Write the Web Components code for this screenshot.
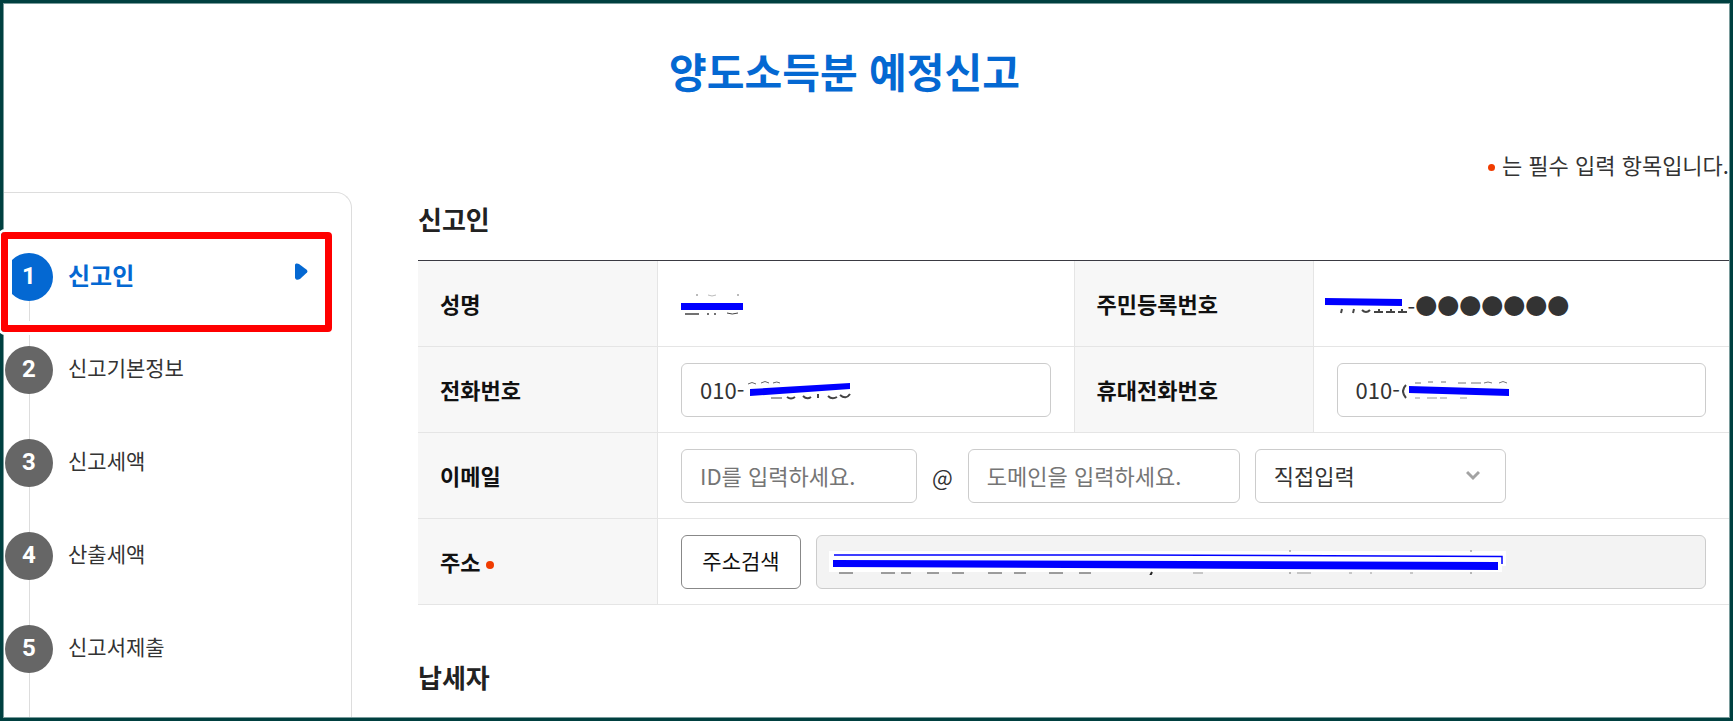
<!DOCTYPE html>
<html lang="ko">
<head>
<meta charset="utf-8">
<title>양도소득분 예정신고</title>
<style>
  html, body{
    margin:0;
    height:100%;
  }

  body{
    font-family:"Noto Sans CJK KR", "Noto Sans", sans-serif;
    font-size:22px;
    color:#333;
    background:#fff;
  }
</style>
</head>
<body>
<report-page>
  <span slot="title">양도소득분 예정신고</span>
  <span slot="note">는 필수 입력 항목입니다.</span>
  <step-list slot="steps">
    <step-item number="1" active>신고인</step-item>
    <step-item number="2">신고기본정보</step-item>
    <step-item number="3">신고세액</step-item>
    <step-item number="4">산출세액</step-item>
    <step-item number="5">신고서제출</step-item>
  </step-list>
  <form-section>
    <span slot="title">신고인</span>
    <applicant-form></applicant-form>
  </form-section>
  <form-section>
    <span slot="title">납세자</span>
  </form-section>
</report-page>

<script>
class BaseElement extends HTMLElement {
  constructor() {
    super();
    this.attachShadow({ mode: 'open' });
    this.shadowRoot.innerHTML = this.template();
  }
}

class ReportPage extends BaseElement {
  template() {
    return `
      <style>
        :host{
          display:flex;
          flex-direction:column;
          box-sizing:border-box;
          min-height:100vh;
          border:3px solid #004040;
          box-shadow:inset 0 0 0 1px #7a9c9c;
          padding:1px;
        }

        h1{
          margin:0;
          padding:36px 44px 0 0;
          font-size:41px;
          line-height:60px;
          font-weight:700;
          text-align:center;
          color:#0468d2;
        }

        .note{
          margin:0;
          padding-top:48px;
          line-height:32px;
          text-align:right;
        }

        .note::before{
          content:"";
          display:inline-block;
          width:7px;
          height:7px;
          margin-right:7px;
          border-radius:50%;
          background:#f03c00;
          vertical-align:3px;
        }

        .layout{
          flex:1;
          display:flex;
          gap:66px;
          margin-top:12px;
        }

        main{
          flex:1;
          min-width:0;
          padding-top:7px;
        }
      </style>

      <h1><slot name="title"></slot></h1>
      <p class="note"><slot name="note"></slot></p>
      <div class="layout">
        <slot name="steps"></slot>
        <main><slot></slot></main>
      </div>
    `;
  }
}

class StepList extends BaseElement {
  template() {
    return `
      <style>
        :host{
          display:flex;
          flex-direction:column;
          box-sizing:border-box;
          flex:0 0 348px;
          padding:60px 26px 0 1px;
          border-top:1px solid #ddd;
          border-right:1px solid #ddd;
          border-top-right-radius:16px;
        }

        ::slotted(:last-child){
          flex:1;
        }
      </style>
      <slot></slot>
    `;
  }
}

class StepItem extends BaseElement {
  template() {
    return `
      <style>
        :host{
          display:block;
          position:relative;
          min-height:68px;
          font-size:21px;
        }

        :host(:not(:last-child)){
          height:93px;
        }

        /* line down to the next step */
        :host::before{
          content:"";
          position:absolute;
          top:0;
          bottom:0;
          left:24px;
          width:1px;
          background:#ddd;
        }

        a{
          display:flex;
          align-items:center;
          gap:15px;
          height:48px;
          color:inherit;
          text-decoration:none;
        }

        .number{
          position:relative;
          width:48px;
          border-radius:50%;
          background:#666;
          color:#fff;
          font:700 24px/46px Roboto, sans-serif;
          padding-bottom:2px;
          text-align:center;
        }

        .label{
          padding-bottom:6px;
        }

        svg{
          display:none;
          margin:0 -1px 12px auto;
        }

        :host([active]) a{
          padding-right:18px;
          color:#0468d2;
          font-size:24px;
          font-weight:700;
        }

        :host([active]) .number{
          background:#0468d2;
        }

        :host([active]) svg{
          display:block;
        }

        /* marker frame round the current step */
        :host([active])::after{
          content:"";
          position:absolute;
          z-index:1;
          top:-21px;
          left:-4px;
          right:-7px;
          height:86px;
          border:7px solid #f00;
          border-radius:4px;
          box-shadow:0 0 0 3px #fff, inset 0 0 0 4px #fff;
          pointer-events:none;
        }
      </style>
      <a href="#">
        <span class="number"></span>
        <span class="label"><slot></slot></span>
        <svg width="13" height="17" viewBox="0 0 13 17"><path d="M0 2Q0 0 2 .5L4 1L12 7Q13 8.500 12 9.500L5 16Q3 17 1 16.500L0 15Z" fill="#0468d2"/></svg>
      </a>
    `;
  }

  connectedCallback() {
    this.shadowRoot.querySelector('.number').textContent = this.getAttribute('number');
    if (this.hasAttribute('active')) {
      this.shadowRoot.querySelector('a').setAttribute('aria-current', 'step');
    }
  }
}

class FormSection extends BaseElement {
  template() {
    return `
      <style>
        :host{
          display:block;
          margin-bottom:52px;
        }

        :host(:last-child){
          margin-bottom:0;
        }

        h2{
          margin:0 0 21px;
          font-size:26px;
          line-height:40px;
          font-weight:700;
          color:#222;
        }

        :host(:last-child) h2{
          margin-bottom:0;
        }
      </style>
      <h2><slot name="title"></slot></h2>
      <slot></slot>
    `;
  }
}

// Pen strokes that hide private values
const strokes = {
  name: `<svg width="64" height="28" viewBox="0 -4 64 28">
    <path d="M16 0v2M57 0v2" stroke="#777"/><path d="M27 1q4 2 8 0" stroke="#bbb" fill="none"/>
    <path d="M4 20h14M27 19v2M34 19v2" stroke="#444" stroke-width="1.500"/><path d="M46 19q5 2 11 0" stroke="#444" fill="none"/>
    <path d="M0 9h62v7H0z" fill="#00f"/></svg>`,
  resident: `<svg width="83" height="32" viewBox="0 -8 83 32">
    <path d="M17 13l-1 4M29 13l-1 4" stroke="#444" stroke-width="2"/><path d="M37 14q4 4 8 0" stroke="#444" stroke-width="2" fill="none"/>
    <path d="M49 16h9M61 16h9M73 16h9M54 13v3M66 13v3M77 13v3" stroke="#444" stroke-width="2"/>
    <path d="M0 2l77 1v7L0 9z" fill="#00f"/></svg>`,
  phone: `<svg width="110" height="24">
    <path d="M2 5q4-3 8 0M15 4q4-3 8 0M27 4q4-2 7 0" stroke="#666" fill="none"/>
    <path d="M25 19h11" stroke="#444"/><path d="M41 18q4 3 8 0M57 17q4 4 8 1M82 17q4 4 9 1M94 16q6 5 10-1" stroke="#444" fill="none" stroke-width="2"/>
    <path d="M72 15v4" stroke="#444" stroke-width="2"/>
    <path d="M4 10l100-6v6L4 17z" fill="#00f"/></svg>`,
  mobile: `<svg width="110" height="24">
    <path d="M4 6q-6 6 0 13" stroke="#444" stroke-width="2" fill="none"/>
    <path d="M13 4h6M26 3h5M39 3h5M56 4h8M69 4h10M82 4q4-2 8 0M97 4q4-3 8 0" stroke="#777" fill="none"/>
    <path d="M13 19h5M25 19h10M38 19h7M58 19h7" stroke="#999"/>
    <path d="M7 7l100 3v7L7 14z" fill="#00f"/></svg>`,
  address: `<svg width="680" height="26">
    <path d="M0 2h677v15h-4v6H0z" fill="#fff"/>
    <path d="M10 24h14M52 24h14M72 24h10M98 24h12M123 24h12M159 24h14M185 24h12M220 24h14M250 24h12" stroke="#444"/>
    <path d="M323 23l-2 4" stroke="#222" stroke-width="2"/>
    <path d="M364 24h10M468 24h14M520 24h3M541 24h2M581 24h3" stroke="#999"/>
    <path d="M461 1v2M642 1v2M461 23v2M642 23v2" stroke="#777"/>
    <path d="M5 6h300l368 1.500v7.500" stroke="#00f" fill="none" stroke-width="1.500"/>
    <path d="M4 11l665 2v8L4 18z" fill="#00f"/></svg>`
};

class PenStroke extends BaseElement {
  template() {
    return `
      <style>
        :host{
          display:block;
        }

        svg{
          display:block;
        }
      </style>
    `;
  }

  connectedCallback() {
    this.setAttribute('aria-hidden', 'true');
    this.shadowRoot.innerHTML += strokes[this.getAttribute('kind')];
  }
}

class ApplicantForm extends BaseElement {
  template() {
    return `
      <style>
        :host{
          display:block;
        }

        table{
          width:100%;
          table-layout:fixed;
          border-collapse:separate;
          border-spacing:0;
          border-top:1px solid #3a3a42;
        }

        .head{
          width:240px;
        }

        th, td{
          box-sizing:border-box;
          height:86px;
          padding:0 23px;
          border-bottom:1px solid #e5e5e5;
          text-align:left;
        }

        th{
          padding:0 22px 2px;
          border-right:1px solid #e5e5e5;
          background:#f7f7f7;
          color:#111;
          font-weight:700;
        }

        td + th{
          border-left:1px solid #e5e5e5;
        }

        .required::after{
          content:"";
          display:inline-block;
          width:8px;
          height:8px;
          margin-left:6px;
          border-radius:50%;
          background:#f03c00;
          vertical-align:2px;
        }

        .row{
          display:flex;
          align-items:center;
          gap:15px;
        }

        .box{
          position:relative;
          flex:1;
        }

        .id{
          flex:0 1 236px;
        }

        .domain{
          flex:0 1 272px;
        }

        .type{
          flex:0 1 251px;
        }

        input, select, button{
          display:block;
          box-sizing:border-box;
          width:100%;
          height:54px;
          margin:0;
          padding:0 18px 2px;
          border:1px solid #ccc;
          border-radius:6px;
          background:#fff;
          color:#333;
          font-family:inherit;
          font-size:22px;
        }

        input::placeholder{
          color:#757575;
          opacity:1;
        }

        input[readonly]{
          background:#f3f3f3;
        }

        select{
          appearance:none;
        }

        button{
          width:120px;
          padding:0 0 4px;
          border-color:#888;
          color:#111;
          font-size:21px;
        }

        .arrow{
          position:absolute;
          top:21px;
          right:26px;
          pointer-events:none;
        }

        .box pen-stroke{
          position:absolute;
          top:16px;
          left:65px;
        }

        .address pen-stroke{
          top:14px;
          left:13px;
        }

        .resident{
          display:flex;
          align-items:center;
          margin-left:-12px;
        }
      </style>

      <table>
        <colgroup>
          <col class="head"><col><col class="head"><col>
        </colgroup>
        <tr>
          <th scope="row">성명</th>
          <td><pen-stroke kind="name"></pen-stroke></td>
          <th scope="row">주민등록번호</th>
          <td><div class="resident"><pen-stroke kind="resident"></pen-stroke><span>-●●●●●●●</span></div></td>
        </tr>
        <tr>
          <th scope="row"><label for="phone">전화번호</label></th>
          <td><div class="box"><input id="phone" value="010-"><pen-stroke kind="phone"></pen-stroke></div></td>
          <th scope="row"><label for="mobile">휴대전화번호</label></th>
          <td><div class="box"><input id="mobile" value="010-"><pen-stroke kind="mobile"></pen-stroke></div></td>
        </tr>
        <tr>
          <th scope="row"><label for="email">이메일</label></th>
          <td colspan="3">
            <div class="row">
              <div class="box id"><input id="email" placeholder="ID를 입력하세요."></div>
              <span>@</span>
              <div class="box domain"><input aria-label="도메인" placeholder="도메인을 입력하세요."></div>
              <div class="box type">
                <select aria-label="도메인 선택"><option>직접입력</option></select>
                <svg class="arrow" width="14" height="11" viewBox="0 0 14 11"><path d="M1 2l6 6 6-6" fill="none" stroke="#a3a3a3" stroke-width="3"/></svg>
              </div>
            </div>
          </td>
        </tr>
        <tr>
          <th scope="row"><label class="required" for="address">주소</label></th>
          <td colspan="3">
            <div class="row">
              <button type="button">주소검색</button>
              <div class="box address"><input id="address" readonly><pen-stroke kind="address"></pen-stroke></div>
            </div>
          </td>
        </tr>
      </table>
    `;
  }
}

customElements.define('pen-stroke', PenStroke);
customElements.define('applicant-form', ApplicantForm);
customElements.define('form-section', FormSection);
customElements.define('step-item', StepItem);
customElements.define('step-list', StepList);
customElements.define('report-page', ReportPage);
</script>
</body>
</html>
